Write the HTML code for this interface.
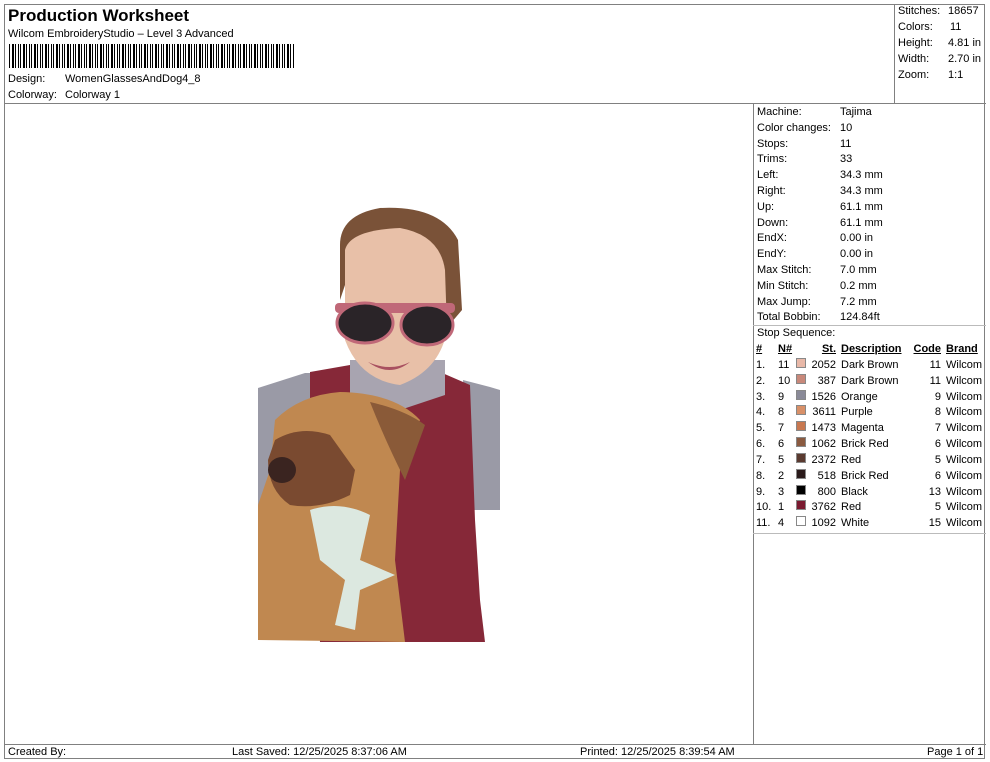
<!DOCTYPE html>
<html><head><meta charset="utf-8"><style>
body{margin:0;background:#fff;font-family:"Liberation Sans",Arial,sans-serif;color:#000;}
.p{position:absolute;font-size:11px;white-space:nowrap;}
.ln{position:absolute;background:#808080;}
</style></head><body>
<div style="position:relative;width:990px;height:762px;overflow:hidden">
<div style="position:absolute;left:4px;top:4px;width:981px;height:755px;border:1px solid #808080;box-sizing:border-box"></div>
<div class="ln" style="left:4px;top:103px;width:982px;height:1px"></div>
<div class="ln" style="left:894px;top:4px;width:1px;height:99px"></div>
<div class="ln" style="left:753px;top:103px;width:1px;height:641px"></div>
<div class="ln" style="left:4px;top:744px;width:982px;height:1px"></div>
<div class="ln" style="left:753px;top:325px;width:233px;height:1px;background:#bbb"></div>
<div class="ln" style="left:753px;top:533px;width:233px;height:1px;background:#bbb"></div>

<div class="p" style="left:8px;top:6px;font-size:17px;font-weight:bold">Production Worksheet</div>
<div class="p" style="left:8px;top:28px">Wilcom EmbroideryStudio – Level 3 Advanced</div>
<div style="position:absolute;left:9px;top:44px;width:285px;height:24px;background:repeating-linear-gradient(90deg,#000 0 1px,#fff 1px 3px,#000 3px 5px,#fff 5px 6px,#000 6px 7px,#fff 7px 9px,#000 9px 10px,#fff 10px 11px)"></div>
<div class="p" style="left:8px;top:73px">Design:</div><div class="p" style="left:65px;top:73px">WomenGlassesAndDog4_8</div>
<div class="p" style="left:8px;top:89px">Colorway:</div><div class="p" style="left:65px;top:89px">Colorway 1</div>

<div class="p" style="left:898px;top:5px">Stitches:</div><div class="p" style="left:948px;top:5px">18657</div>
<div class="p" style="left:898px;top:21px">Colors:</div><div class="p" style="left:950px;top:21px">11</div>
<div class="p" style="left:898px;top:37px">Height:</div><div class="p" style="left:948px;top:37px">4.81 in</div>
<div class="p" style="left:898px;top:53px">Width:</div><div class="p" style="left:948px;top:53px">2.70 in</div>
<div class="p" style="left:898px;top:69px">Zoom:</div><div class="p" style="left:948px;top:69px">1:1</div>

<div class="p" style="left:757px;top:105px;line-height:15.8px">Machine:<br>Color changes:<br>Stops:<br>Trims:<br>Left:<br>Right:<br>Up:<br>Down:<br>EndX:<br>EndY:<br>Max Stitch:<br>Min Stitch:<br>Max Jump:<br>Total Bobbin:<br>Stop Sequence:</div>
<div class="p" style="left:840px;top:105px;line-height:15.8px">Tajima<br>10<br>11<br>33<br>34.3 mm<br>34.3 mm<br>61.1 mm<br>61.1 mm<br>0.00 in<br>0.00 in<br>7.0 mm<br>0.2 mm<br>7.2 mm<br>124.84ft</div>

<div style="position:absolute;left:756px;top:342px;font-size:11px;line-height:15.85px">
<table style="border-collapse:collapse;font-size:11px;line-height:15.85px" cellpadding="0">
<tr style="font-weight:bold;text-decoration:underline"><td style="width:22px">#</td><td style="width:18px">N#</td><td style="width:14px"></td><td style="width:26px;text-align:right">St.</td><td style="width:70px;padding-left:5px">Description</td><td style="width:30px;text-align:right">Code</td><td style="padding-left:5px">Brand</td></tr>
<tr><td>1.</td><td>11</td><td><i style="display:inline-block;width:8px;height:8px;background:#e8b8a8;border:1px solid #888"></i></td><td align="right">2052</td><td style="padding-left:5px">Dark Brown</td><td align="right">11</td><td style="padding-left:5px">Wilcom</td></tr>
<tr><td>2.</td><td>10</td><td><i style="display:inline-block;width:8px;height:8px;background:#c8887a;border:1px solid #888"></i></td><td align="right">387</td><td style="padding-left:5px">Dark Brown</td><td align="right">11</td><td style="padding-left:5px">Wilcom</td></tr>
<tr><td>3.</td><td>9</td><td><i style="display:inline-block;width:8px;height:8px;background:#8a8a98;border:1px solid #888"></i></td><td align="right">1526</td><td style="padding-left:5px">Orange</td><td align="right">9</td><td style="padding-left:5px">Wilcom</td></tr>
<tr><td>4.</td><td>8</td><td><i style="display:inline-block;width:8px;height:8px;background:#d89068;border:1px solid #888"></i></td><td align="right">3611</td><td style="padding-left:5px">Purple</td><td align="right">8</td><td style="padding-left:5px">Wilcom</td></tr>
<tr><td>5.</td><td>7</td><td><i style="display:inline-block;width:8px;height:8px;background:#c87850;border:1px solid #888"></i></td><td align="right">1473</td><td style="padding-left:5px">Magenta</td><td align="right">7</td><td style="padding-left:5px">Wilcom</td></tr>
<tr><td>6.</td><td>6</td><td><i style="display:inline-block;width:8px;height:8px;background:#8a5a40;border:1px solid #888"></i></td><td align="right">1062</td><td style="padding-left:5px">Brick Red</td><td align="right">6</td><td style="padding-left:5px">Wilcom</td></tr>
<tr><td>7.</td><td>5</td><td><i style="display:inline-block;width:8px;height:8px;background:#5a3a30;border:1px solid #888"></i></td><td align="right">2372</td><td style="padding-left:5px">Red</td><td align="right">5</td><td style="padding-left:5px">Wilcom</td></tr>
<tr><td>8.</td><td>2</td><td><i style="display:inline-block;width:8px;height:8px;background:#2a1a1a;border:1px solid #888"></i></td><td align="right">518</td><td style="padding-left:5px">Brick Red</td><td align="right">6</td><td style="padding-left:5px">Wilcom</td></tr>
<tr><td>9.</td><td>3</td><td><i style="display:inline-block;width:8px;height:8px;background:#000;border:1px solid #888"></i></td><td align="right">800</td><td style="padding-left:5px">Black</td><td align="right">13</td><td style="padding-left:5px">Wilcom</td></tr>
<tr><td>10.</td><td>1</td><td><i style="display:inline-block;width:8px;height:8px;background:#7a1a30;border:1px solid #888"></i></td><td align="right">3762</td><td style="padding-left:5px">Red</td><td align="right">5</td><td style="padding-left:5px">Wilcom</td></tr>
<tr><td>11.</td><td>4</td><td><i style="display:inline-block;width:8px;height:8px;background:#fff;border:1px solid #888"></i></td><td align="right">1092</td><td style="padding-left:5px">White</td><td align="right">15</td><td style="padding-left:5px">Wilcom</td></tr>
</table></div>

<div class="p" style="left:8px;top:746px">Created By:</div>
<div class="p" style="left:232px;top:746px">Last Saved: 12/25/2025 8:37:06 AM</div>
<div class="p" style="left:580px;top:746px">Printed: 12/25/2025 8:39:54 AM</div>
<div class="p" style="left:927px;top:746px">Page 1 of 1</div>

<svg style="position:absolute;left:0;top:0" width="990" height="762">
<polygon points="258,388 305,373 313,373 313,513 258,513" fill="#9a9aa6"/>
<polygon points="463,380 490,387 500,390 500,510 470,510" fill="#9a9aa6"/>
<polygon points="310,372 350,365 440,372 470,385 475,520 480,600 485,642 320,642 310,500" fill="#862838"/>
<polygon points="350,360 445,360 445,395 400,410 350,400" fill="#a8a4b0"/>
<path d="M340,245 Q340,215 380,208 Q440,205 458,240 L462,310 L445,330 L440,270 L350,270 L340,300 Z" fill="#7a5238"/>
<path d="M345,250 Q350,230 400,228 Q440,235 445,270 L447,330 Q440,370 400,385 Q360,380 345,340 Z" fill="#e8c0a8"/>
<rect x="335" y="303" width="120" height="10" rx="4" fill="#c06878"/>
<ellipse cx="365" cy="323" rx="28" ry="20" fill="#2a2428" stroke="#c06878" stroke-width="3"/>
<ellipse cx="427" cy="325" rx="26" ry="20" fill="#2a2428" stroke="#c06878" stroke-width="3"/>
<path d="M368,362 Q390,372 410,362 Q390,378 368,362 Z" fill="#a85060"/>
<path d="M258,505 L270,470 L275,420 Q300,395 340,392 Q395,393 420,420 L400,470 L395,560 L405,642 L258,640 Z" fill="#c08850"/>
<path d="M370,402 Q405,410 425,425 L405,480 Q385,440 370,402 Z" fill="#8a5a38"/>
<path d="M275,440 Q300,425 330,435 L355,470 L350,495 Q320,510 290,505 Q268,490 268,460 Z" fill="#7a4a30"/>
<ellipse cx="282" cy="470" rx="14" ry="13" fill="#3a2420"/>
<path d="M310,510 Q340,500 370,515 L360,560 L395,575 L360,590 L355,630 L335,625 L345,580 L320,560 Z" fill="#dce8e0"/>
</svg>
</div>
</body></html>
